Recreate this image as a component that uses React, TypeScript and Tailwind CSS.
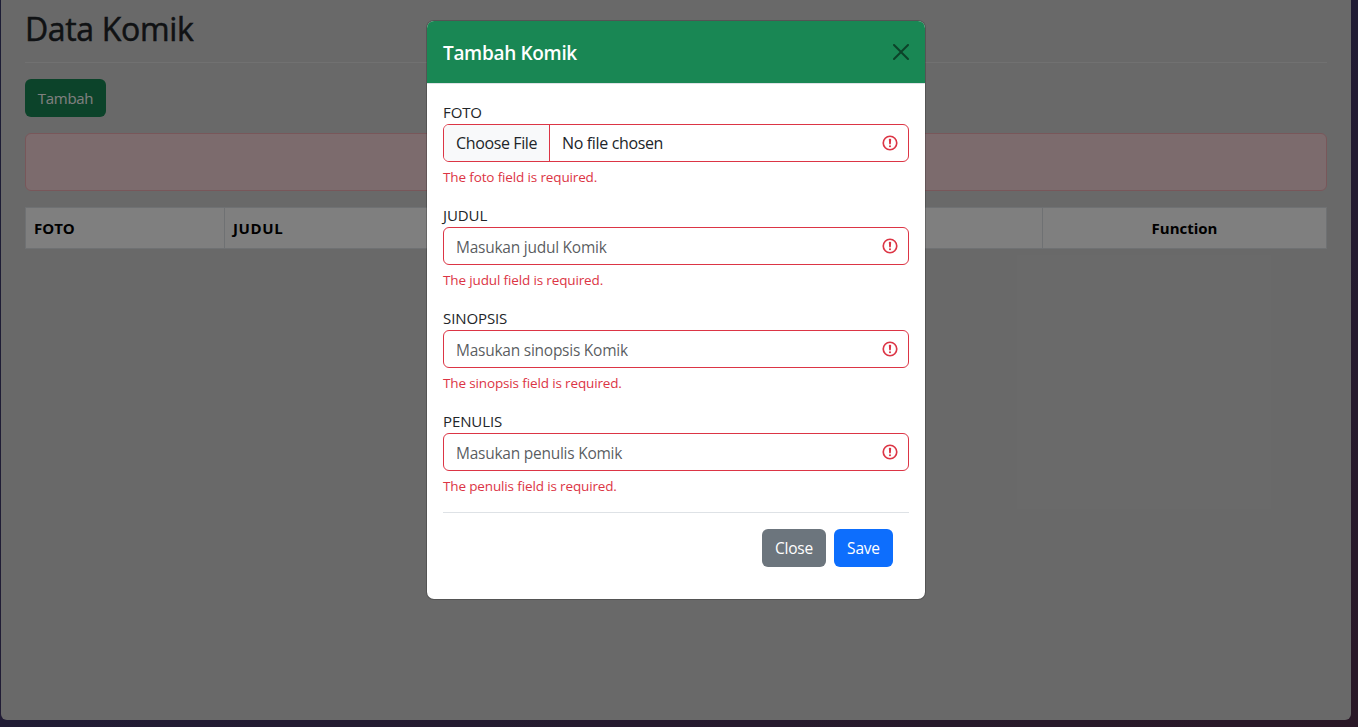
import React from "react";

const fields = [
  { label: "JUDUL", name: "judul" },
  { label: "SINOPSIS", name: "sinopsis" },
  { label: "PENULIS", name: "penulis" },
];

function InvalidIcon() {
  return (
    <svg className="h-[18px] w-[18px] shrink-0" viewBox="0 0 12 12" fill="none" stroke="#dc3545">
      <circle cx="6" cy="6" r="4.5" strokeWidth="1.1" />
      <path strokeLinejoin="round" strokeWidth="1.15" d="M5.8 3.7h.4L6 6.5z" />
      <circle cx="6" cy="8.2" r=".7" fill="#dc3545" stroke="none" />
    </svg>
  );
}

function ErrorText({ name }: { name: string }) {
  return (
    <p className="mt-[5px] h-5 text-[13.5px] leading-[21px] tracking-[-0.14px] text-[#dc3545]">
      The {name} field is required.
    </p>
  );
}

function Label({ children }: { children: React.ReactNode }) {
  return <label className="block h-6 text-[15px] leading-6 tracking-[-0.1px]">{children}</label>;
}

function Page() {
  return (
    <main className="ml-px h-[720px] w-[1350px] rounded-b-[6px] bg-[#d3d3d3] px-6 pt-2.5">
      <h1 className="h-[38px] text-[32px] font-medium leading-[38px] tracking-[-0.35px] [-webkit-text-stroke:0.5px_#212529]">
        Data Komik
      </h1>
      <hr className="mt-3.5 border-t border-[#e2e2e2]" />
      <button className="mt-4 block h-[38px] w-[81px] rounded-md bg-[#198754] text-[15px] leading-[39px] tracking-[-0.3px] text-white">
        Tambah
      </button>
      <div className="mt-4 h-[58px] rounded-md border border-[#f1aeb5] bg-[#f8d7da]" />
      <div className="mt-4 flex h-[42px] border border-[#dee2e6] bg-white text-[15px] font-bold leading-10 text-black">
        <div className="w-[199px] border-r border-[#dee2e6] px-2">FOTO</div>
        <div className="w-[818px] border-r border-[#dee2e6] px-2 tracking-[0.6px]">JUDUL</div>
        <div className="flex-1 text-center">Function</div>
      </div>
    </main>
  );
}

function Modal() {
  return (
    <section className="flex h-[580px] w-[500px] flex-col overflow-hidden rounded-lg border border-black/20 bg-white bg-clip-padding">
      <header className="flex h-[63px] shrink-0 items-center justify-between border-b border-[#dee2e6] bg-[#198754] px-4">
        <h5 className="pt-0.5 text-[19px] font-semibold leading-[30px] tracking-[-0.32px] text-white">Tambah Komik</h5>
        <svg className="h-4 w-4 opacity-50" viewBox="0 0 16 16" fill="#000">
          <path d="M.293.293a1 1 0 0 1 1.414 0L8 6.586 14.293.293a1 1 0 1 1 1.414 1.414L9.414 8l6.293 6.293a1 1 0 0 1-1.414 1.414L8 9.414l-6.293 6.293a1 1 0 0 1-1.414-1.414L6.586 8 .293 1.707a1 1 0 0 1 0-1.414" />
        </svg>
      </header>
      <div className="px-4 pt-4">
        <Label>FOTO</Label>
        <div className="flex h-[38px] items-center overflow-hidden rounded-md border border-[#dc3545] pr-[9px]">
          <span className="h-9 w-[106px] border-r border-[#dc3545] bg-[#f8f9fa] pl-3 leading-9 tracking-[-0.37px]">Choose File</span>
          <span className="flex-1 pl-3 tracking-[-0.35px]">No file chosen</span>
          <InvalidIcon />
        </div>
        <ErrorText name="foto" />
        {fields.map((field) => (
          <div key={field.name} className="pt-4">
            <Label>{field.label}</Label>
            <div className="flex h-[38px] items-center rounded-md border border-[#dc3545] pl-3 pr-[9px]">
              <span className="flex-1 pt-0.5 text-[15.5px] leading-6 tracking-[-0.25px] text-[#212529]/75">Masukan {field.name} Komik</span>
              <InvalidIcon />
            </div>
            <ErrorText name={field.name} />
          </div>
        ))}
        <footer className="mt-4 flex justify-end gap-2 border-t border-[#dee2e6] px-4 pt-4 text-[15.5px] tracking-[-0.2px] text-white">
          <button className="h-[38px] w-16 rounded-md bg-[#6c757d] pt-0.5">Close</button>
          <button className="h-[38px] w-[59px] rounded-md bg-[#0d6efd] pt-0.5">Save</button>
        </footer>
      </div>
    </section>
  );
}

export default function App() {
  return (
    <div className="relative h-[727px] w-[1358px] overflow-hidden bg-linear-to-br from-[#38386a] via-[#42386a] to-[#54304e] font-['Open_Sans','Noto_Sans',sans-serif] text-base text-[#212529]">
      <Page />
      <div className="absolute inset-0 flex items-start justify-center bg-black/50 pr-1.5 pt-5">
        <Modal />
      </div>
    </div>
  );
}
